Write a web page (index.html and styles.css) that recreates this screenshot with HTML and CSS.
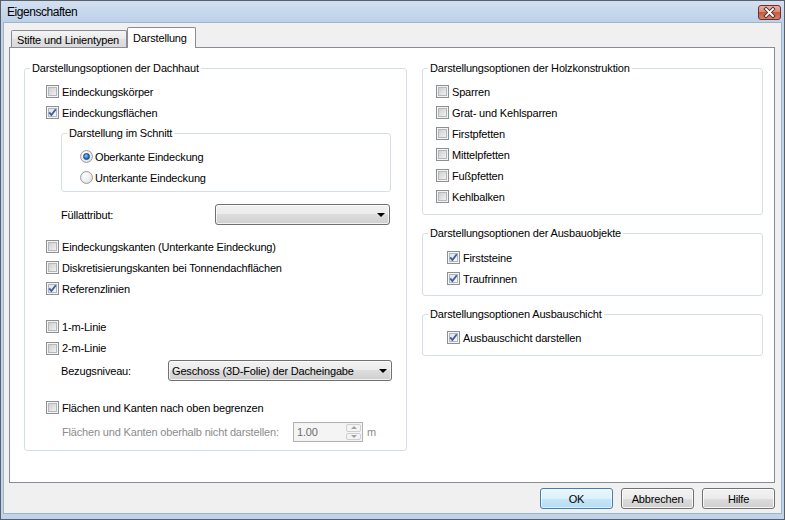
FILE: index.html
```html
<!DOCTYPE html>
<html lang="de">
<head>
<meta charset="utf-8">
<title>Eigenschaften</title>
<link rel="stylesheet" href="styles.css">
</head>
<body>
<div class="window">
  <div class="titlebar">
    <span class="title">Eigenschaften</span>
    <span class="close">
      <svg width="23" height="15" viewBox="0 0 23 15">
        <defs>
          <linearGradient id="cg" x1="0" y1="0" x2="0" y2="1">
            <stop offset="0" stop-color="#eab3a6"/>
            <stop offset="0.45" stop-color="#d98a78"/>
            <stop offset="0.5" stop-color="#c45a42"/>
            <stop offset="1" stop-color="#d8836a"/>
          </linearGradient>
        </defs>
        <rect x="0.5" y="0.5" width="22" height="14" rx="2.5" fill="url(#cg)" stroke="#6f3127"/>
        <path d="M8 4 L15 11 M15 4 L8 11" stroke="#4b2c26" stroke-width="3.6" stroke-linecap="square" fill="none"/>
        <path d="M8 4 L15 11 M15 4 L8 11" stroke="#ffffff" stroke-width="1.8" stroke-linecap="square" fill="none"/>
      </svg>
    </span>
  </div>
  <div class="client">
    <div class="tabs">
      <div class="tab">Stifte und Linientypen</div>
      <div class="tab active">Darstellung</div>
    </div>
    <div class="panel">
      <div class="col col-left">
        <fieldset class="group">
          <legend>Darstellungsoptionen der Dachhaut</legend>
          <div class="gbody b-dach">
            <div class="row first"><span class="cb"></span>Eindeckungskörper</div>
            <div class="row"><span class="cb checked"><svg viewBox="0 0 13 13"><path d="M3.2 6.4 L5.4 9 L9.8 3.2"/></svg></span>Eindeckungsflächen</div>
            <fieldset class="group g-schnitt">
              <legend>Darstellung im Schnitt</legend>
              <div class="gbody b-schnitt">
                <div class="row first"><span class="rb on"></span>Oberkante Eindeckung</div>
                <div class="row"><span class="rb"></span>Unterkante Eindeckung</div>
              </div>
            </fieldset>
            <div class="field f-fuell">
              <span class="flabel">Füllattribut:</span>
              <span class="combo c-fuell"><span class="arrow"></span></span>
            </div>
            <div class="row gap-a"><span class="cb"></span>Eindeckungskanten (Unterkante Eindeckung)</div>
            <div class="row"><span class="cb"></span>Diskretisierungskanten bei Tonnendachflächen</div>
            <div class="row"><span class="cb checked"><svg viewBox="0 0 13 13"><path d="M3.2 6.4 L5.4 9 L9.8 3.2"/></svg></span>Referenzlinien</div>
            <div class="row gap-b"><span class="cb"></span>1-m-Linie</div>
            <div class="row r-22"><span class="cb"></span>2-m-Linie</div>
            <div class="field f-bezug">
              <span class="flabel">Bezugsniveau:</span>
              <span class="combo c-bezug"><span class="ctext">Geschoss (3D-Folie) der Dacheingabe</span><span class="arrow"></span></span>
            </div>
            <div class="row gap-c"><span class="cb"></span>Flächen und Kanten nach oben begrenzen</div>
            <div class="field f-spin">
              <span class="flabel disabled">Flächen und Kanten oberhalb nicht darstellen:</span>
              <span class="spin">
                <span class="stext">1.00</span>
                <span class="sbtns">
                  <span class="sbtn"><span class="sup"></span></span>
                  <span class="sbtn"><span class="sdown"></span></span>
                </span>
              </span>
              <span class="unit disabled">m</span>
            </div>
          </div>
        </fieldset>
      </div>
      <div class="col col-right">
        <fieldset class="group">
          <legend>Darstellungsoptionen der Holzkonstruktion</legend>
          <div class="gbody b-holz">
            <div class="row first"><span class="cb"></span>Sparren</div>
            <div class="row"><span class="cb"></span>Grat- und Kehlsparren</div>
            <div class="row"><span class="cb"></span>Firstpfetten</div>
            <div class="row"><span class="cb"></span>Mittelpfetten</div>
            <div class="row"><span class="cb"></span>Fußpfetten</div>
            <div class="row"><span class="cb"></span>Kehlbalken</div>
          </div>
        </fieldset>
        <fieldset class="group g-ausbau">
          <legend>Darstellungsoptionen der Ausbauobjekte</legend>
          <div class="gbody b-ausbau">
            <div class="row first"><span class="cb checked"><svg viewBox="0 0 13 13"><path d="M3.2 6.4 L5.4 9 L9.8 3.2"/></svg></span>Firststeine</div>
            <div class="row"><span class="cb checked"><svg viewBox="0 0 13 13"><path d="M3.2 6.4 L5.4 9 L9.8 3.2"/></svg></span>Traufrinnen</div>
          </div>
        </fieldset>
        <fieldset class="group g-schicht">
          <legend>Darstellungsoptionen Ausbauschicht</legend>
          <div class="gbody b-schicht">
            <div class="row first"><span class="cb checked"><svg viewBox="0 0 13 13"><path d="M3.2 6.4 L5.4 9 L9.8 3.2"/></svg></span>Ausbauschicht darstellen</div>
          </div>
        </fieldset>
      </div>
    </div>
    <div class="buttons">
      <span class="btn default">OK</span>
      <span class="btn">Abbrechen</span>
      <span class="btn">Hilfe</span>
    </div>
  </div>
</div>
</body>
</html>
```

FILE: styles.css
```css
html, body {
  margin: 0;
  padding: 0;
}
body {
  width: 785px;
  height: 520px;
  overflow: hidden;
  font-family: "Liberation Sans", Arial, sans-serif;
  font-size: 11px;
  letter-spacing: -0.17px;
  color: #000;
  background: #ffffff;
}
.window {
  box-sizing: border-box;
  width: 785px;
  height: 520px;
  border: 1px solid #5a6068;
  background: #bfd3ea;
  display: flex;
  flex-direction: column;
}
.titlebar {
  height: 21px;
  flex: none;
  display: flex;
  align-items: center;
  padding-left: 6px;
  background: linear-gradient(#d3e0f0, #bcd1ea);
}
.title {
  font-size: 12px;
  letter-spacing: -0.45px;
  color: #000;
}
.close {
  margin-left: auto;
  margin-right: 3px;
  margin-top: 1px;
  width: 23px;
  height: 15px;
  display: flex;
}
.client {
  flex: 1;
  margin: 0 2px 5px 2px;
  border: 1px solid #a3b3c6;
  background: #f0f0f0;
  padding: 4px 6px 0 5px;
  display: flex;
  flex-direction: column;
}
.tabs {
  display: flex;
  align-items: flex-end;
  padding-left: 2px;
  height: 20px;
}
.tab {
  box-sizing: border-box;
  width: 116px;
  height: 17px;
  border: 1px solid #898c95;
  border-bottom: 0;
  border-radius: 2px 2px 0 0;
  background: linear-gradient(#f5f5f5, #e9e9e9 50%, #e0e0e0 50%, #dadada);
  padding: 2px 0 0 5px;
  line-height: 14px;
  white-space: nowrap;
}
.tab.active {
  width: 69px;
  height: 21px;
  margin-bottom: -1px;
  background: #ffffff;
  position: relative;
  z-index: 1;
  padding-top: 3px;
}
.panel {
  box-sizing: border-box;
  height: 436px;
  border: 1px solid #898c95;
  background: #ffffff;
  display: flex;
  align-items: flex-start;
  gap: 15px;
  padding: 14px 11px 0 14px;
}
.col {
  display: flex;
  flex-direction: column;
}
.col-left {
  width: 383px;
}
.col-right {
  width: 341px;
}
.group {
  margin: 0;
  padding: 0;
  min-width: 0;
  border: 1px solid #d5dfe5;
  border-radius: 3px;
}
.group legend {
  padding: 0 2px;
  margin-left: 5px;
  line-height: 13px;
  font-size: 11px;
}
.gbody {
  display: flex;
  flex-direction: column;
}
.row {
  height: 21px;
  display: flex;
  align-items: center;
  white-space: nowrap;
}
.row.first {
  margin-top: 6px;
}
.b-dach {
  padding: 0 0 8px 21px;
}
.g-schnitt {
  margin: 4px 15px 0 15px;
}
.b-schnitt {
  padding: 0 0 3px 18px;
}
.field {
  display: flex;
  align-items: center;
  white-space: nowrap;
}
.flabel {
  flex: none;
}
.f-fuell {
  margin-top: 12px;
  height: 21px;
}
.f-fuell .flabel {
  margin-left: 15px;
  width: 154px;
}
.gap-a {
  margin-top: 11px;
}
.gap-b {
  margin-top: 17px;
}
.r-22 {
  height: 22px;
}
.f-bezug {
  margin-top: 1px;
  height: 21px;
}
.f-bezug .flabel {
  margin-left: 15px;
  width: 107px;
}
.gap-c {
  margin-top: 16px;
}
.f-spin {
  margin-top: 4px;
  height: 20px;
}
.f-spin .flabel {
  margin-left: 16px;
  width: 231px;
}
.disabled {
  color: #8c8c8c;
}
.unit {
  margin-left: 4px;
}

/* checkbox */
.cb {
  box-sizing: border-box;
  width: 13px;
  height: 13px;
  flex: none;
  margin-right: 3px;
  border: 1px solid #8e8f8f;
  background: #f4f4f4;
  position: relative;
}
.cb::before {
  content: "";
  position: absolute;
  left: 1px;
  top: 1px;
  width: 9px;
  height: 9px;
  box-sizing: border-box;
  border: 1px solid #b3b8be;
  background: linear-gradient(135deg, #cfcfcf, #f1f1f1);
}
.cb.checked::before {
  background: linear-gradient(135deg, #dde3ea, #f6f8fa);
}
.cb svg {
  position: absolute;
  left: -1px;
  top: -1px;
  width: 13px;
  height: 13px;
}
.cb svg path {
  fill: none;
  stroke: #41609f;
  stroke-width: 1.9;
}

/* radio */
.rb {
  box-sizing: border-box;
  width: 13px;
  height: 13px;
  flex: none;
  margin-right: 2px;
  border-radius: 50%;
  border: 1px solid #9a9c9e;
  background: radial-gradient(circle at 40% 35%, #ffffff 0%, #ececec 55%, #d4d4d4 100%);
  position: relative;
}
.rb.on::after {
  content: "";
  position: absolute;
  left: 2px;
  top: 2px;
  width: 7px;
  height: 7px;
  box-sizing: border-box;
  border-radius: 50%;
  border: 1px solid #173c78;
  background: radial-gradient(circle at 40% 35%, #8fd0ff 0%, #2d7fd4 50%, #14458f 100%);
}

/* combo */
.combo {
  box-sizing: border-box;
  height: 21px;
  flex: none;
  border: 1px solid #707070;
  border-radius: 3px;
  background: linear-gradient(#f2f2f2, #ebebeb 50%, #dddddd 50%, #cfcfcf);
  box-shadow: inset 0 0 0 1px rgba(255, 255, 255, 0.7);
  display: flex;
  align-items: center;
  padding-left: 3px;
}
.c-fuell {
  width: 175px;
}
.c-bezug {
  width: 224px;
}
.ctext {
  white-space: nowrap;
}
.arrow {
  margin-left: auto;
  margin-right: 4px;
  width: 0;
  height: 0;
  border-left: 4px solid transparent;
  border-right: 4px solid transparent;
  border-top: 4px solid #000;
}

/* spin */
.spin {
  box-sizing: border-box;
  width: 70px;
  height: 20px;
  flex: none;
  border: 1px solid #adb2b5;
  background: #f4f4f4;
  display: flex;
  align-items: stretch;
}
.stext {
  flex: 1;
  color: #6d6d6d;
  padding-left: 3px;
  display: flex;
  align-items: center;
}
.sbtns {
  width: 15px;
  display: flex;
  flex-direction: column;
  padding: 1px 1px 1px 0;
  gap: 1px;
}
.sbtn {
  flex: 1;
  border: 1px solid #cfcfcf;
  border-radius: 2px;
  background: #f4f4f4;
  display: flex;
  align-items: center;
  justify-content: center;
}
.sup {
  width: 0;
  height: 0;
  border-left: 3px solid transparent;
  border-right: 3px solid transparent;
  border-bottom: 3px solid #a0a0a0;
}
.sdown {
  width: 0;
  height: 0;
  border-left: 3px solid transparent;
  border-right: 3px solid transparent;
  border-top: 3px solid #a0a0a0;
}

/* right column groups */
.b-holz {
  padding: 0 0 7px 13px;
}
.g-ausbau {
  margin-top: 12px;
}
.b-ausbau {
  padding: 0 0 6px 24px;
}
.b-ausbau .row.first {
  margin-top: 7px;
}
.g-schicht {
  margin-top: 12px;
}
.b-schicht {
  padding: 0 0 7px 24px;
}

/* buttons */
.buttons {
  display: flex;
  justify-content: flex-end;
  gap: 8px;
  margin-top: 5px;
}
.btn {
  box-sizing: border-box;
  width: 73px;
  height: 21px;
  border: 1px solid #707070;
  border-radius: 3px;
  background: linear-gradient(#f2f2f2, #ebebeb 50%, #dddddd 50%, #cfcfcf);
  box-shadow: inset 0 0 0 1px rgba(255, 255, 255, 0.8);
  display: flex;
  align-items: center;
  justify-content: center;
}
.btn.default {
  border-color: #3c7fb1;
  background: linear-gradient(#eaf6fd, #dcf0fb 50%, #c6e6f8 50%, #b3ddf4);
  box-shadow: inset 0 0 0 1px rgba(255, 255, 255, 0.6);
}
```
